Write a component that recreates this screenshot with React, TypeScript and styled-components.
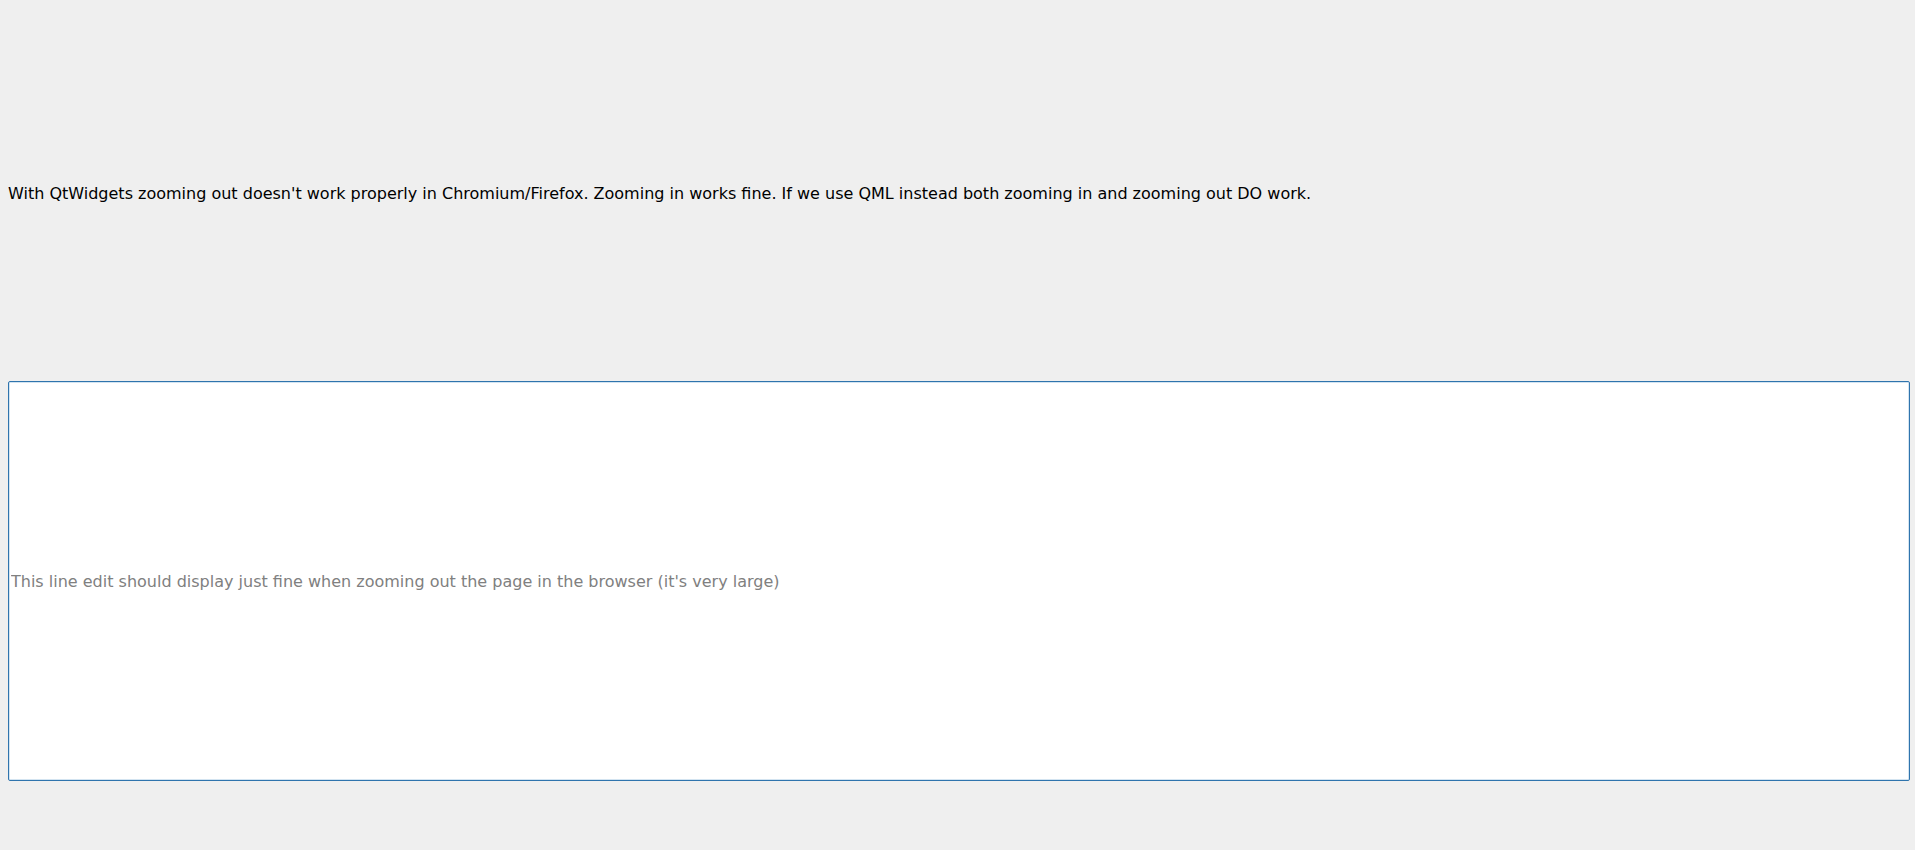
import React from "react";
import styled, { createGlobalStyle } from "styled-components";

const Global = createGlobalStyle`
  html, body { margin: 0; padding: 0; background: #efefef; }
  body { font-family: "DejaVu Sans", sans-serif; }
`;

const Window = styled.div`
  width: 1915px;
  height: 850px;
  box-sizing: border-box;
  background: #efefef;
  display: flex;
  flex-direction: column;
  padding: 0 5px 0 8px;
`;

const LabelArea = styled.div`
  height: 381px;
  display: flex;
  align-items: center;
  padding-top: 5px;
  box-sizing: border-box;
`;

const Label = styled.div`
  font-family: "DejaVu Sans", sans-serif;
  font-size: 16px;
  color: #000;
  line-height: 19px;
`;

const LineEdit = styled.input`
  width: 100%;
  height: 400px;
  box-sizing: border-box;
  border: 1px solid #2f74ad;
  border-radius: 2px;
  box-shadow: inset 0 0 0 1px #d3e4f1;
  background: #fff;
  padding: 0 2px;
  font-family: "DejaVu Sans", sans-serif;
  font-size: 16px;
  color: #000;
  outline: none;
  &::placeholder {
    color: #808080;
  }
`;

export default function App() {
  return (
    <>
      <Global />
      <Window>
        <LabelArea>
          <Label>
            With QtWidgets zooming out doesn't work properly in Chromium/Firefox. Zooming in works fine. If we use QML instead both zooming in and zooming out DO work.
          </Label>
        </LabelArea>
        <LineEdit placeholder="This line edit should display just fine when zooming out the page in the browser (it's very large)" />
      </Window>
    </>
  );
}
